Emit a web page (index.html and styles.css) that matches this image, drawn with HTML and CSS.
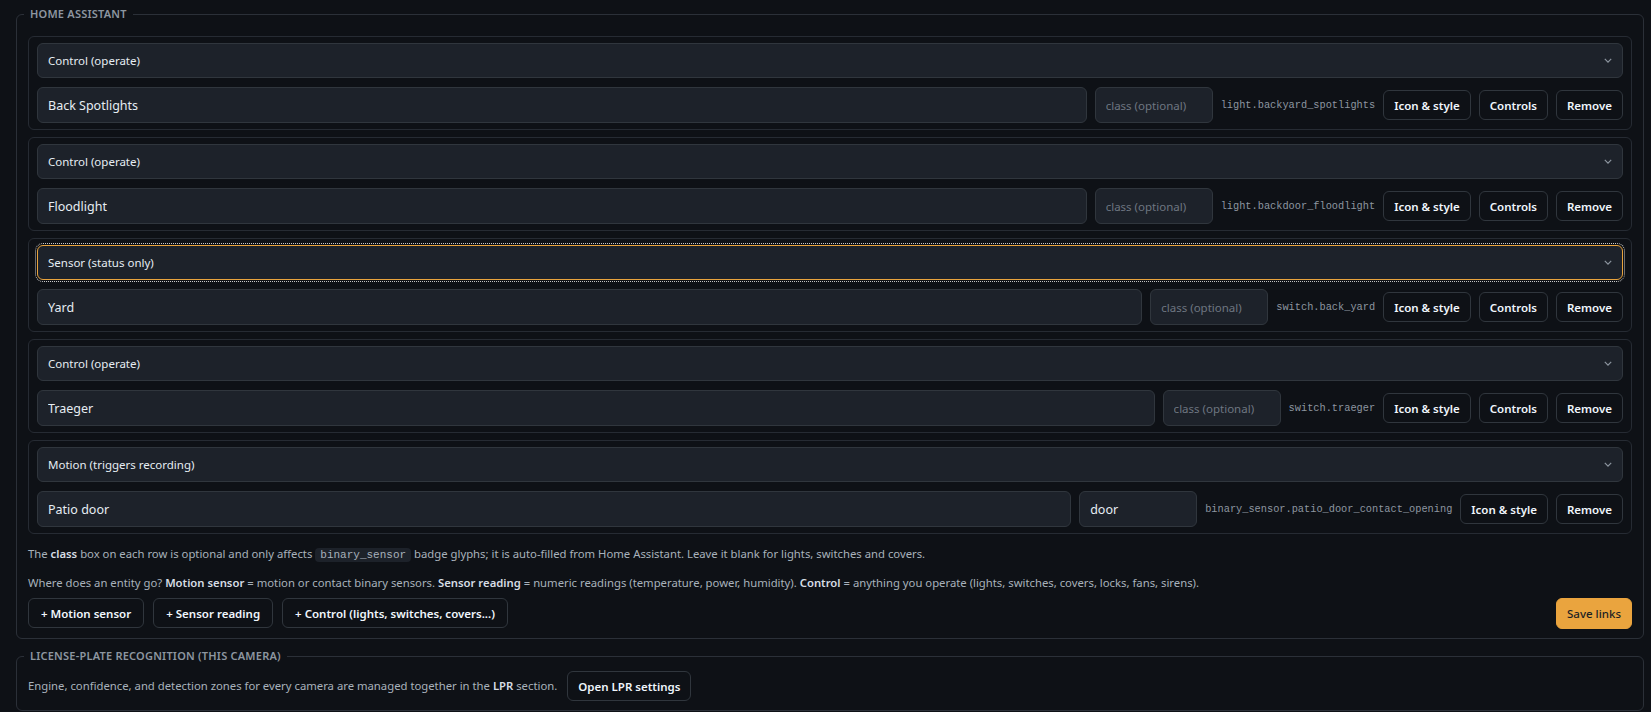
FILE: index.html
```html
<!DOCTYPE html>
<html lang="en">
<head>
    <meta charset="UTF-8">
    <title>Camera settings</title>
    <link rel="stylesheet" href="styles.css">
</head>
<body>
    <main class="page">
        <fieldset class="panel">
            <legend>Home Assistant</legend>

            <div class="link-card">
                <div class="select-box">
                    <span>Control (operate)</span>
                    <svg class="chevron" viewBox="0 0 10 6"><path d="M1 1l4 4 4-4"/></svg>
                </div>
                <div class="link-row">
                    <input class="field name-field" type="text" value="Back Spotlights">
                    <input class="field class-field" type="text" placeholder="class (optional)">
                    <span class="entity-id">light.backyard_spotlights</span>
                    <button class="btn">Icon &amp; style</button>
                    <button class="btn">Controls</button>
                    <button class="btn">Remove</button>
                </div>
            </div>

            <div class="link-card">
                <div class="select-box">
                    <span>Control (operate)</span>
                    <svg class="chevron" viewBox="0 0 10 6"><path d="M1 1l4 4 4-4"/></svg>
                </div>
                <div class="link-row">
                    <input class="field name-field" type="text" value="Floodlight">
                    <input class="field class-field" type="text" placeholder="class (optional)">
                    <span class="entity-id">light.backdoor_floodlight</span>
                    <button class="btn">Icon &amp; style</button>
                    <button class="btn">Controls</button>
                    <button class="btn">Remove</button>
                </div>
            </div>

            <div class="link-card">
                <div class="select-box focused">
                    <span>Sensor (status only)</span>
                    <svg class="chevron" viewBox="0 0 10 6"><path d="M1 1l4 4 4-4"/></svg>
                </div>
                <div class="link-row">
                    <input class="field name-field" type="text" value="Yard">
                    <input class="field class-field" type="text" placeholder="class (optional)">
                    <span class="entity-id">switch.back_yard</span>
                    <button class="btn">Icon &amp; style</button>
                    <button class="btn">Controls</button>
                    <button class="btn">Remove</button>
                </div>
            </div>

            <div class="link-card">
                <div class="select-box">
                    <span>Control (operate)</span>
                    <svg class="chevron" viewBox="0 0 10 6"><path d="M1 1l4 4 4-4"/></svg>
                </div>
                <div class="link-row">
                    <input class="field name-field" type="text" value="Traeger">
                    <input class="field class-field" type="text" placeholder="class (optional)">
                    <span class="entity-id">switch.traeger</span>
                    <button class="btn">Icon &amp; style</button>
                    <button class="btn">Controls</button>
                    <button class="btn">Remove</button>
                </div>
            </div>

            <div class="link-card">
                <div class="select-box">
                    <span>Motion (triggers recording)</span>
                    <svg class="chevron" viewBox="0 0 10 6"><path d="M1 1l4 4 4-4"/></svg>
                </div>
                <div class="link-row">
                    <input class="field name-field" type="text" value="Patio door">
                    <input class="field class-field" type="text" value="door">
                    <span class="entity-id">binary_sensor.patio_door_contact_opening</span>
                    <button class="btn">Icon &amp; style</button>
                    <button class="btn">Remove</button>
                </div>
            </div>

            <p class="help">The <b>class</b> box on each row is optional and only affects <code>binary_sensor</code> badge glyphs; it is auto-filled from Home Assistant. Leave it blank for lights, switches and covers.</p>
            <p class="help">Where does an entity go? <b>Motion sensor</b> = motion or contact binary sensors. <b>Sensor reading</b> = numeric readings (temperature, power, humidity). <b>Control</b> = anything you operate (lights, switches, covers, locks, fans, sirens).</p>

            <div class="actions">
                <button class="btn btn-wide">+ Motion sensor</button>
                <button class="btn btn-wide">+ Sensor reading</button>
                <button class="btn btn-wide">+ Control (lights, switches, covers...)</button>
                <button class="btn btn-primary">Save links</button>
            </div>
        </fieldset>

        <fieldset class="panel panel-compact">
            <legend>License-plate recognition (this camera)</legend>
            <div class="lpr-row">
                <span class="help">Engine, confidence, and detection zones for every camera are managed together in the <b>LPR</b> section.</span>
                <button class="btn">Open LPR settings</button>
            </div>
        </fieldset>
    </main>
</body>
</html>
```

FILE: styles.css
```css
body {
    margin: 0;
    background-color: #0e1116;
    color: #c9d1d9;
    font-family: "Noto Sans", "Open Sans", sans-serif;
    font-size: 11.5px;
}
.page {
    padding: 6px 7px 0 16px;
}
.panel {
    margin: 0 0 9px 0;
    padding: 14px 11px 9px 11px;
    border: 1px solid #2b3038;
    border-radius: 6px;
    min-width: 0;
}
.panel-compact {
    padding-top: 7px;
}
.panel legend {
    margin-left: -4px;
    padding: 0 6px;
    font-size: 11px;
    line-height: 16px;
    font-weight: 600;
    letter-spacing: 0.02em;
    text-transform: uppercase;
    color: #8d96a0;
}
.link-card {
    border: 1px solid #262b33;
    border-radius: 6px;
    padding: 6px 8px;
    margin-bottom: 7px;
}
.select-box {
    display: flex;
    align-items: center;
    justify-content: space-between;
    height: 35px;
    box-sizing: border-box;
    padding: 0 10px;
    background-color: #1d222a;
    border: 1px solid #30363d;
    border-radius: 6px;
    color: #e6edf3;
}
.select-box.focused {
    border-color: #e8a33d;
    outline: 1px dotted #c9c9c9;
    outline-offset: 1px;
}
.chevron {
    width: 8px;
    height: 5px;
    fill: none;
    stroke: #8d96a0;
    stroke-width: 1.5;
}
.link-row {
    display: flex;
    align-items: center;
    gap: 8px;
    margin-top: 9px;
}
.field {
    height: 36px;
    box-sizing: border-box;
    padding: 0 10px;
    background-color: #1d222a;
    border: 1px solid #30363d;
    border-radius: 6px;
    color: #e6edf3;
    font-family: inherit;
    font-size: 12.5px;
}
.field::placeholder {
    color: #6e7681;
    font-size: 11.5px;
}
.name-field {
    flex: 1;
    min-width: 0;
}
.class-field {
    width: 118px;
}
.entity-id {
    font-family: "Liberation Mono", monospace;
    font-size: 10.3px;
    color: #8d96a0;
    white-space: nowrap;
}
.btn {
    height: 30px;
    padding: 0 10px;
    background-color: #0e1116;
    border: 1px solid #30363d;
    border-radius: 6px;
    color: #f0f6fc;
    font-family: inherit;
    font-size: 11.5px;
    font-weight: 600;
    white-space: nowrap;
    cursor: pointer;
}
.btn-wide {
    padding: 0 12px;
}
.btn-primary {
    margin-left: auto;
    height: 31px;
    background-color: #eaa43e;
    border-color: #eaa43e;
    color: #1b1f24;
    font-weight: 500;
}
.help {
    margin: 12px 0 0 0;
    line-height: 16px;
    font-size: 11.3px;
    color: #a8b1bb;
}
.help b {
    color: #d6dde4;
    font-weight: 600;
}
.help code {
    font-family: "Liberation Mono", monospace;
    font-size: 11px;
    padding: 1px 5px;
    background-color: #1d222a;
    border-radius: 4px;
    color: #a8b1bb;
}
.actions {
    display: flex;
    gap: 9px;
    margin-top: 7px;
}
.lpr-row {
    display: flex;
    align-items: center;
    gap: 10px;
}
.lpr-row .help {
    margin: 0;
}
```
